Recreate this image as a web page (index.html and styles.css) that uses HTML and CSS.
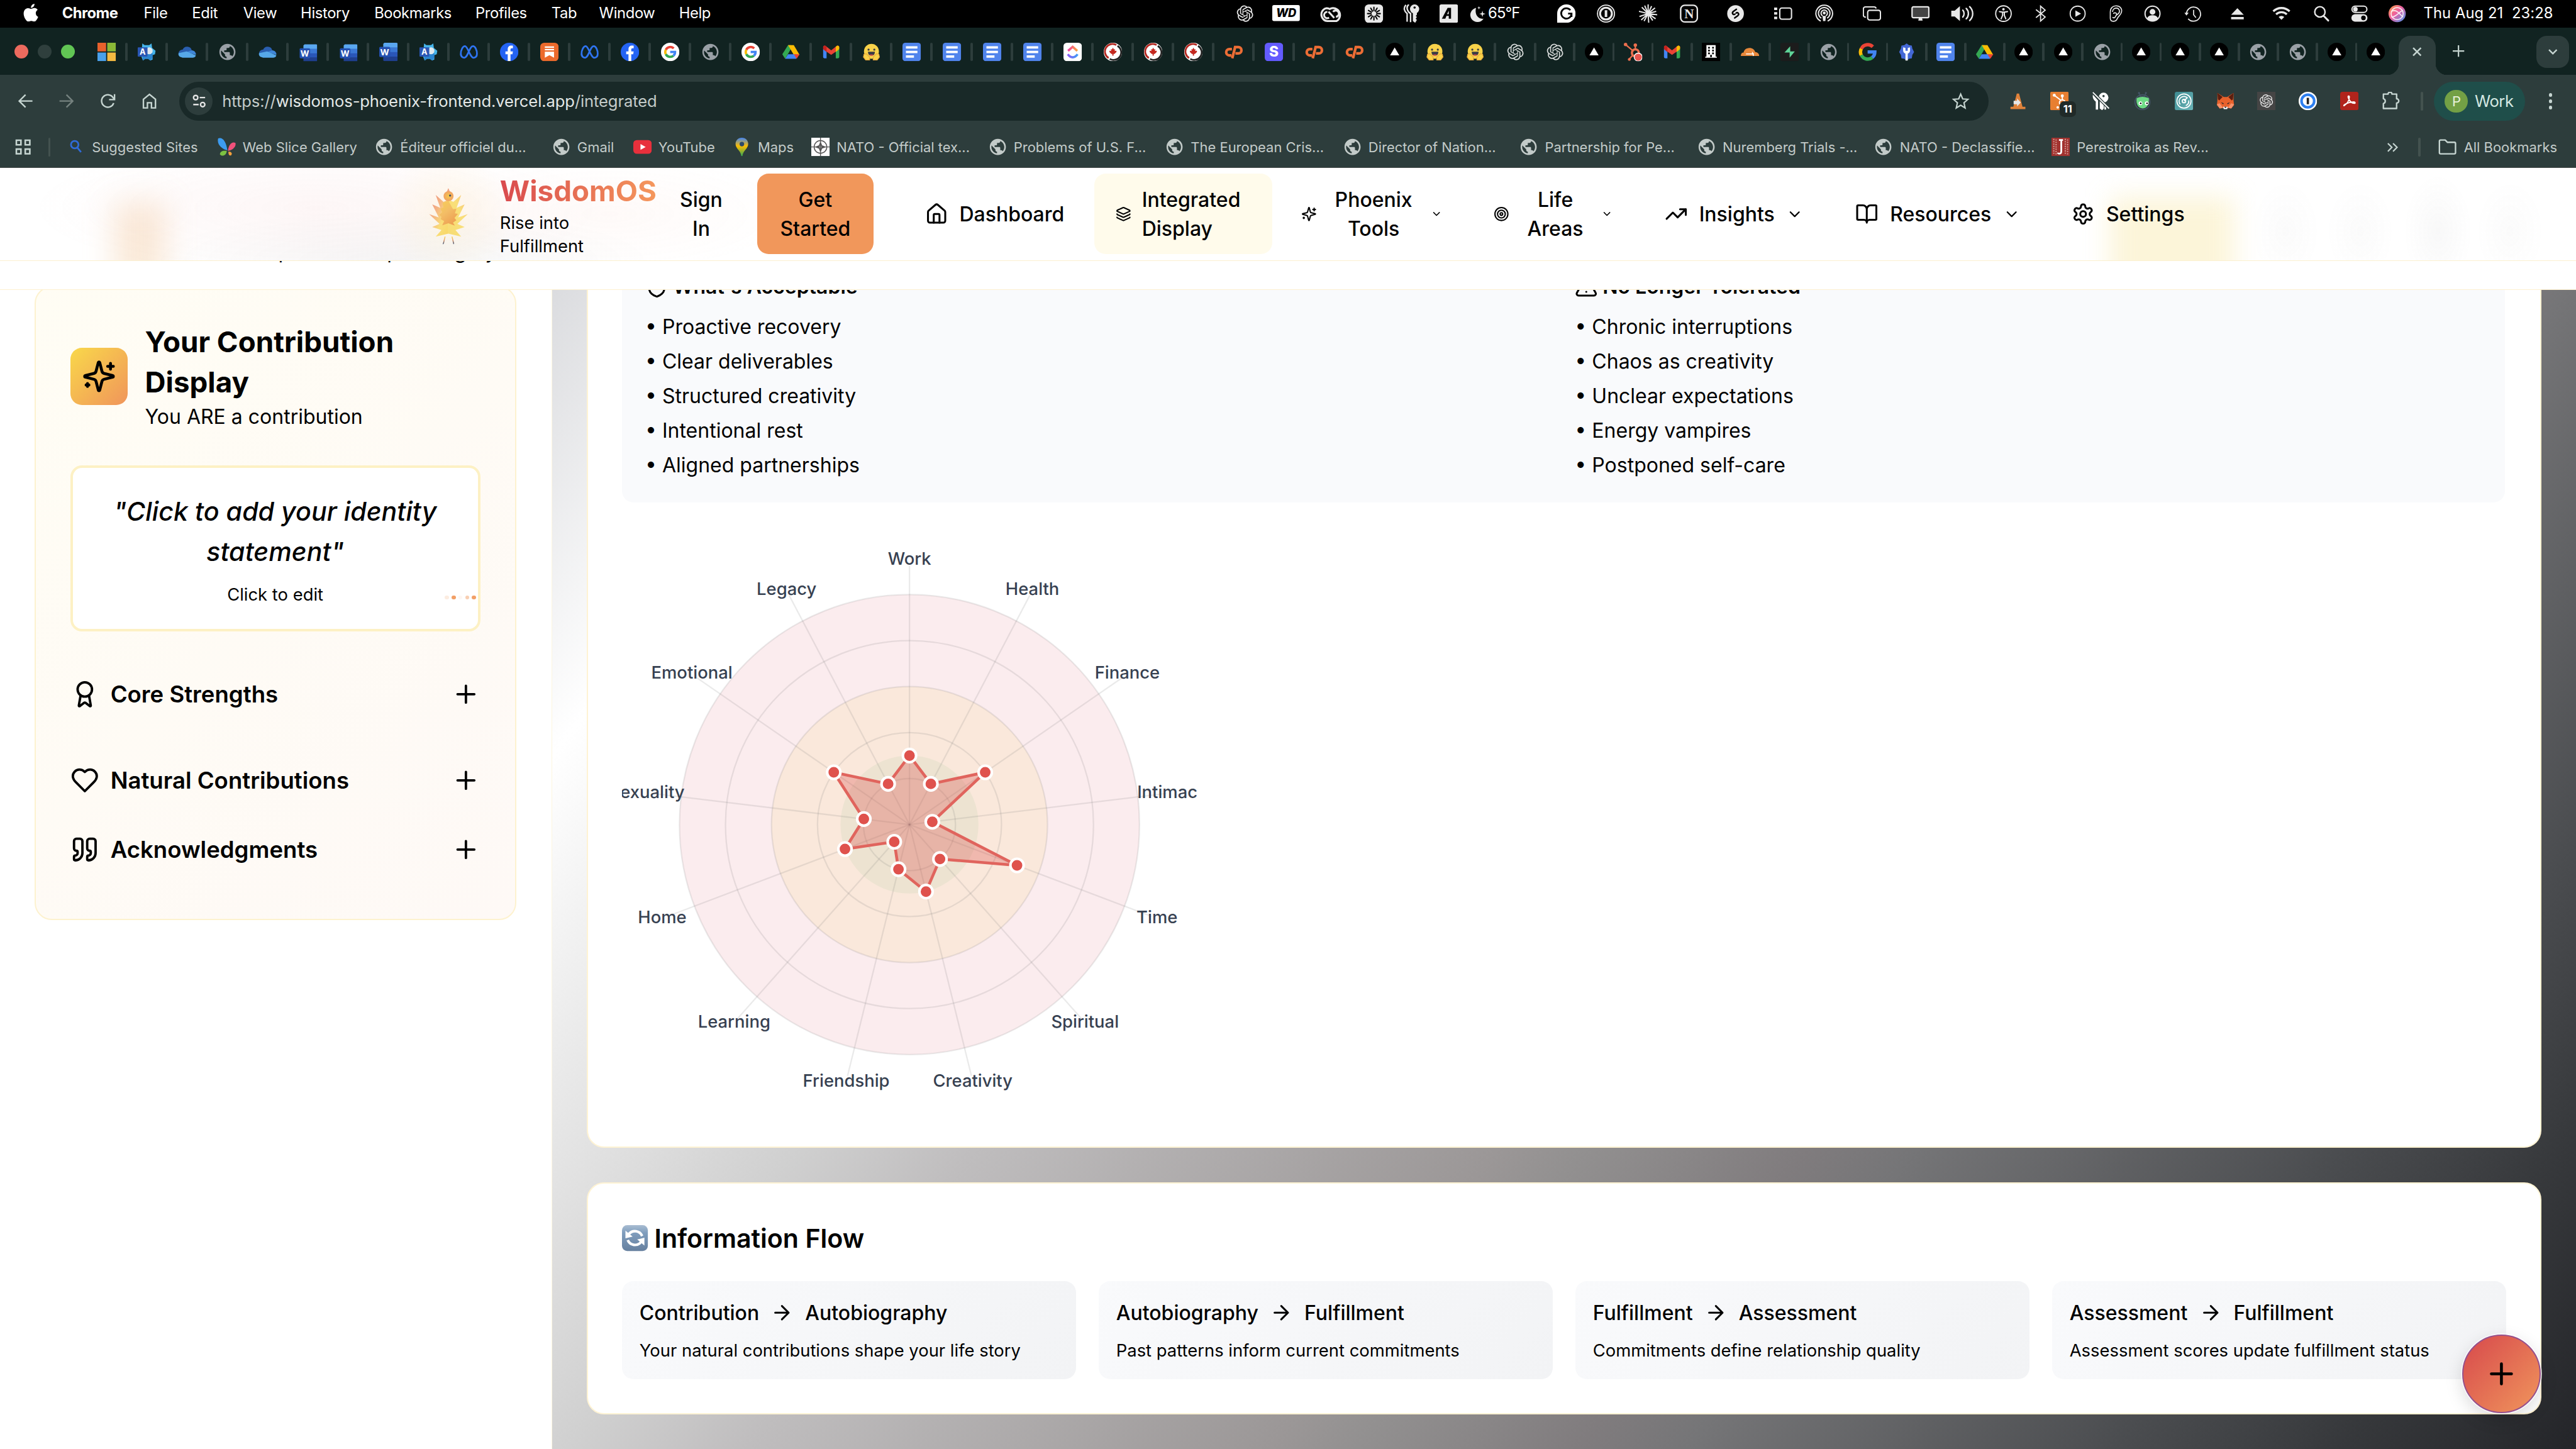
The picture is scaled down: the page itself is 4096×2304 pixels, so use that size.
FILE: index.html
```html
<!DOCTYPE html>
<html lang="en">
<head>
<meta charset="utf-8">
<title>WisdomOS - Integrated Display</title>
<link rel="stylesheet" href="styles.css">
</head>
<body>
<svg class="defs" aria-hidden="true">
<defs>
<linearGradient id="gMaps" x1="0" y1="0" x2="0" y2="1"><stop offset="0" stop-color="#4285f4"/><stop offset=".45" stop-color="#fbbc04"/><stop offset="1" stop-color="#34a853"/></linearGradient>
<linearGradient id="gSiri" x1="0" y1="0" x2="1" y2="1"><stop offset="0" stop-color="#f7a33c"/><stop offset=".45" stop-color="#ef5fa0"/><stop offset="1" stop-color="#3d9bf5"/></linearGradient>
<linearGradient id="gWing" x1="0" y1="0" x2="1" y2="1"><stop offset="0" stop-color="#e9857b"/><stop offset=".35" stop-color="#f4b183"/><stop offset=".65" stop-color="#f9dd78"/><stop offset="1" stop-color="#f8d765"/></linearGradient>
<linearGradient id="gWing2" x1="0" y1="1" x2="1" y2="0"><stop offset="0" stop-color="#f7dc74"/><stop offset=".6" stop-color="#f9df78"/><stop offset="1" stop-color="#f5bd7a"/></linearGradient>
<linearGradient id="gBelly" x1="0" y1="0" x2=".6" y2="1"><stop offset="0" stop-color="#f7cf56"/><stop offset=".5" stop-color="#f3bd66"/><stop offset="1" stop-color="#eda052"/></linearGradient>
<radialGradient id="gHead"><stop offset="0" stop-color="#f6cb4c"/><stop offset="1" stop-color="#f0a064"/></radialGradient>
<linearGradient id="gLeg" x1="0" y1="0" x2="0" y2="1"><stop offset="0" stop-color="#f9d65a"/><stop offset=".5" stop-color="#e8a070"/><stop offset="1" stop-color="#44506a"/></linearGradient>
<linearGradient id="gSync" x1="0" y1="0" x2="0" y2="1"><stop offset="0" stop-color="#a9bdd2"/><stop offset=".3" stop-color="#7f9dbd"/><stop offset="1" stop-color="#66809f"/></linearGradient>
<linearGradient id="gCu" x1="0" y1="0" x2="1" y2="0"><stop offset="0" stop-color="#f23fa4"/><stop offset="1" stop-color="#f9a53b"/></linearGradient>
<linearGradient id="gCu2" x1="0" y1="0" x2="1" y2="0"><stop offset="0" stop-color="#8b5cf6"/><stop offset="1" stop-color="#3f9df5"/></linearGradient>
<linearGradient id="gTeal" x1="0" y1="0" x2="1" y2="1"><stop offset="0" stop-color="#3d8a90"/><stop offset="1" stop-color="#6cb6ba"/></linearGradient>
</defs>
<symbol id="apple" viewBox="0 0 24 24"><path fill="#fff" d="M12.152 6.896c-.948 0-2.415-1.078-3.96-1.04-2.04.027-3.91 1.183-4.961 3.014-2.117 3.675-.546 9.103 1.519 12.09 1.013 1.454 2.208 3.09 3.792 3.039 1.52-.065 2.09-.987 3.935-.987 1.831 0 2.35.987 3.96.948 1.637-.026 2.676-1.48 3.676-2.948 1.156-1.688 1.636-3.325 1.662-3.415-.039-.013-3.182-1.221-3.22-4.857-.026-3.04 2.48-4.494 2.597-4.559-1.429-2.09-3.623-2.324-4.39-2.376-2-.156-3.675 1.09-4.61 1.09zM15.53 3.83c.843-1.012 1.4-2.427 1.245-3.83-1.207.052-2.662.805-3.532 1.818-.78.896-1.454 2.338-1.273 3.714 1.338.104 2.715-.688 3.559-1.701"/></symbol>
<symbol id="openai" viewBox="-1.5 -1.5 27 27"><path fill="currentColor" d="M22.2819 9.8211a5.9847 5.9847 0 0 0-.5157-4.9108 6.0462 6.0462 0 0 0-6.5098-2.9A6.0651 6.0651 0 0 0 4.9807 4.1818a5.9847 5.9847 0 0 0-3.9977 2.9 6.0462 6.0462 0 0 0 .7427 7.0966 5.98 5.98 0 0 0 .511 4.9107 6.051 6.051 0 0 0 6.5146 2.9001A5.9847 5.9847 0 0 0 13.2599 24a6.0557 6.0557 0 0 0 5.7718-4.2058 5.9894 5.9894 0 0 0 3.9977-2.9001 6.0557 6.0557 0 0 0-.7475-7.0729zm-9.022 12.6081a4.4755 4.4755 0 0 1-2.8764-1.0408l.1419-.0804 4.7783-2.7582a.7948.7948 0 0 0 .3927-.6813v-6.7369l2.02 1.1686a.071.071 0 0 1 .038.052v5.5826a4.504 4.504 0 0 1-4.4945 4.4944zm-9.6607-4.1254a4.4708 4.4708 0 0 1-.5346-3.0137l.142.0852 4.783 2.7582a.7712.7712 0 0 0 .7806 0l5.8428-3.3685v2.3324a.0804.0804 0 0 1-.0332.0615L9.74 19.9502a4.4992 4.4992 0 0 1-6.1408-1.6464zM2.3408 7.8956a4.485 4.485 0 0 1 2.3655-1.9728V11.6a.7664.7664 0 0 0 .3879.6765l5.8144 3.3543-2.0201 1.1685a.0757.0757 0 0 1-.071 0l-4.8303-2.7865A4.504 4.504 0 0 1 2.3408 7.872zm16.5963 3.8558L13.1038 8.364 15.1192 7.2a.0757.0757 0 0 1 .071 0l4.8303 2.7913a4.4944 4.4944 0 0 1-.6765 8.1042v-5.6772a.79.79 0 0 0-.407-.667zm2.0107-3.0231l-.142-.0852-4.7735-2.7818a.7759.7759 0 0 0-.7854 0L9.409 9.2297V6.8974a.0662.0662 0 0 1 .0284-.0615l4.8303-2.7866a4.4992 4.4992 0 0 1 6.6802 4.66zM8.3065 12.863l-2.02-1.1638a.0804.0804 0 0 1-.038-.0567V6.0742a4.4992 4.4992 0 0 1 7.3757-3.4537l-.142.0805L8.704 5.459a.7948.7948 0 0 0-.3927.6813zm1.0976-2.3654l2.602-1.4998 2.6069 1.4998v2.9994l-2.5974 1.4997-2.6067-1.4997Z"/></symbol>
<symbol id="globe" viewBox=".57 .57 22.86 22.86"><path fill="currentColor" d="M12 2C6.48 2 2 6.48 2 12s4.48 10 10 10 10-4.48 10-10S17.52 2 12 2zm-1 17.93c-3.95-.49-7-3.85-7-7.93 0-.62.08-1.21.21-1.79L9 15v1c0 1.1.9 2 2 2v1.93zm6.9-2.54c-.26-.81-1-1.39-1.9-1.39h-1v-3c0-.55-.45-1-1-1H8v-2h2c.55 0 1-.45 1-1V7h2c1.1 0 2-.9 2-2v-.41c2.93 1.19 5 4.06 5 7.41 0 2.08-.8 3.97-2.1 5.39z"/></symbol>

<symbol id="ms" viewBox="0 0 32 32"><path fill="#e8612c" d="M0 0h15v15H0z"/><path fill="#8bb837" d="M17 0h15v15H17z"/><path fill="#4aa0ea" d="M0 17h15v15H0z"/><path fill="#f4b941" d="M17 17h15v15H17z"/></symbol>
<symbol id="aword" viewBox="0 0 32 32"><path fill="#46b4ea" d="M8 1l4 3h8l4-3 1 8 6 5-1 6-5 2 1 7-4 2-4-3h-5l-4 3-3-8z"/><path fill="#2b84cf" d="M8 22l18-4 0 8-4 5-4-3h-5l-4 3z"/><circle cx="20" cy="14" r="6" fill="#dfe8ee"/><rect x="0" y="8" width="17" height="16" rx="1" fill="#2a56b4"/><text x="8.5" y="21" font-size="14" font-weight="700" fill="#fff" text-anchor="middle">A</text></symbol>
<symbol id="onedrive" viewBox="0 0 32 32"><path fill="#2a5fb0" d="M8 12a8.500 8.500 0 0 1 16 1l-7 7-13 2-3-3c0-4 3-7 7-7z"/><path fill="#3f86d8" d="M24 13c4 0 8 4 7 8l-16-5z"/><path fill="#56a8e8" d="M5 25c-3-1-5-4-4-7l14-3 16 7c0 2-2 4-5 4H8z"/></symbol>
<symbol id="word" viewBox="0 0 32 32"><path fill="#5aa7f0" d="M9 0h21a2 2 0 0 1 2 2v7H7V2z"/><path fill="#3b78d4" d="M7 8h25v9H7z"/><path fill="#2a56b8" d="M7 16h25v8H7z"/><path fill="#1f3f8f" d="M7 24h25v6a2 2 0 0 1-2 2H9a2 2 0 0 1-2-2z"/><rect x="0" y="7" width="19" height="18" rx="2" fill="#2450b0"/><text x="9.500" y="21.500" font-size="15" font-weight="700" fill="#fff" text-anchor="middle">W</text></symbol>
<symbol id="wordsm" viewBox="-1 -2.500 34 35"><use href="#word"/></symbol>
<symbol id="meta" viewBox="0 0 32 32"><path fill="none" stroke="#2f74f0" stroke-width="3" d="M2 22C1 12 6 6 9 6c5 0 9 20 15 20 4 0 6-3 6-7 0-6-3-13-7-13-6 0-9 20-15 20-4 0-6-3-6-7"/></symbol>
<symbol id="fb" viewBox="0 0 32 32"><circle cx="16" cy="16" r="16" fill="#2463f3"/><path fill="#fff" d="M13.500 32V20H9.500v-5h4v-3.500c0-4.500 2.500-6.500 6-6.500 1.300 0 2.500.1 3 .2v4.500h-2c-1.700 0-2.200.9-2.200 2.200V15h4.200l-.8 5h-3.400v12z"/></symbol>
<symbol id="stack" viewBox="0 0 32 32"><rect width="32" height="32" rx="7" fill="#ec6a2c"/><path stroke="#fff" stroke-width="2.400" d="M8 7.500h16M8 12h16"/><path fill="#fff" d="M8 15.500h16V26l-8-4.500L8 26z"/></symbol>
<symbol id="gletter" viewBox="0 0 32 32"><g fill="none" stroke-width="6"><path stroke="#ea4335" d="M5 10.500A12.500 12.500 0 0 1 25 7"/><path stroke="#fbbc04" d="M5 10.300a12.500 12.500 0 0 0 0 11.400"/><path stroke="#34a853" d="M5 21.500A12.500 12.500 0 0 0 24 25.700"/><path stroke="#4285f4" d="M16 16h12.500a12.500 12.500 0 0 1-4.500 9.700"/></g></symbol>
<symbol id="gwhite" viewBox="0 0 32 32"><circle cx="16" cy="16" r="16" fill="#fff"/><use href="#gletter" x="5" y="5" width="22" height="22"/></symbol>
<symbol id="drive" viewBox="0 0 32 32"><path fill="#34a853" d="M11 4h5l2 3L6 28l-5-8z"/><path fill="#fbbc04" d="M11 4h10l10 17H21z"/><path fill="#4285f4" d="M6 28l5-8h15l-1 8z"/><path fill="#ea4335" d="M21 20h10l-5 8z"/></symbol>
<symbol id="gmail" viewBox="0 0 32 32"><path fill="#4285f4" d="M2 10l6 5v12H4a2 2 0 0 1-2-2z"/><path fill="#34a853" d="M30 10l-6 5v12h4a2 2 0 0 0 2-2z"/><path fill="#ea4335" d="M2 8c0-3 3-4 5-2l9 7 9-7c2-2 5-1 5 2l-1 4-13 9L3 12z"/><path fill="#fbbc04" d="M24 7l1-1c2-2 5-1 5 2v3l-6 5z"/><path fill="#c5221f" d="M8 7L7 6C5 4 2 5 2 8v3l6 5z"/></symbol>
<symbol id="hug" viewBox="0 0 32 32"><circle cx="16" cy="15" r="13" fill="#f8d24a"/><path fill="#f8d24a" stroke="#e9a63a" stroke-width="1.200" d="M3 20l4-1 6 6v5H6l-4-5zM29 20l-4-1-6 6v5h7l4-5z"/><circle cx="11" cy="12" r="1.800" fill="#3a3b45"/><circle cx="21" cy="12" r="1.800" fill="#3a3b45"/><path fill="#3a3b45" d="M10 15.500h12c0 5-3 7-6 7s-6-2-6-7z"/><path fill="#ef4e4e" d="M12.500 20.500h7c-1 1.500-2.500 2-3.500 2s-2.500-.5-3.500-2z"/></symbol>
<symbol id="doc" viewBox="0 0 32 32"><rect width="32" height="32" rx="5" fill="#5084ec"/><path fill="#fff" d="M6 6h20v4H6zM6 14h20v4H6zM6 22h14v4H6z"/></symbol>
<symbol id="clickup" viewBox="0 0 32 32"><rect width="32" height="32" rx="6" fill="#fff"/><path fill="none" stroke="url(#gCu)" stroke-width="4" d="M8 14l8-7 8 7"/><path fill="none" stroke="url(#gCu2)" stroke-width="4" d="M7.500 20c5 7 12 7 17 0"/></symbol>
<symbol id="maple" viewBox="0 0 32 32"><circle cx="16" cy="16" r="16" fill="#fff"/><path fill="none" stroke="#b3261e" stroke-width="3" d="M22 4A13 13 0 0 0 8.500 26.500"/><path fill="none" stroke="#222" stroke-width="3" d="M10.500 28A13 13 0 0 0 24 5.500"/><path fill="#c4281f" d="M16 8.500l1.800 3.200 1.800-.7-.5 3.600 2.700-.9.500 2.200-3.600 3.600H17v3h-2v-3h-1.700l-3.600-3.600.5-2.200 2.700.9-.5-3.600 1.800.7z"/></symbol>
<symbol id="cpanel" viewBox="0 0 32 32"><path fill="none" stroke="#ec6d35" stroke-width="4.600" d="M13 11H8.500a5.300 5.300 0 0 0 0 11H12M13.500 27l5-19.500H24a5.500 5.500 0 0 1 0 11h-5"/></symbol>
<symbol id="stripe" viewBox="0 0 32 32"><rect width="32" height="32" rx="6" fill="#635bff"/><text x="16" y="24.500" font-size="25" font-weight="800" fill="#fff" text-anchor="middle">S</text></symbol>
<symbol id="vercel" viewBox="0 0 32 32"><circle cx="16" cy="16" r="16" fill="#000"/><path fill="#fff" d="M16 8.200l8 13.800H8z"/></symbol>
<symbol id="hubspot" viewBox="0 0 32 32"><g stroke="#ec6f4e" fill="none"><path stroke-width="2.500" d="M4 4l13 11M20 4v8M10 28l6-7"/><circle cx="20" cy="17.500" r="6" stroke-width="4"/></g><circle cx="3" cy="3" r="3" fill="#ec6f4e"/><circle cx="20" cy="4" r="3" fill="#ec6f4e"/><circle cx="9.500" cy="29" r="2.500" fill="#ec6f4e"/><circle cx="25" cy="25" r="7" fill="#e8564f" stroke="#fff" stroke-width="1.500"/></symbol>
<symbol id="building" viewBox="0 0 32 32"><path d="M0 0h32v32H0z"/><path fill="#fff" d="M8 4h16v20h2v2H6v-2h2z"/><path fill="#000" d="M11 7h3v3h-3zM18 7h3v3h-3zM11 12h3v3h-3zM18 12h3v3h-3zM11 17h3v3h-3zM18 17h3v3h-3zM14.500 21h3v4h-3z"/></symbol>
<symbol id="cloudflare" viewBox="0 0 32 32"><path fill="#e8883b" d="M0 23c0-4 2-6 5-6 0-4 4-8 10-8 5 0 9 3 10 7 4 0 7 3 7 7z"/><path stroke="#fff" stroke-width="1.600" fill="none" d="M9 19.500h14M20 16l2 7"/></symbol>
<symbol id="supabase" viewBox="0 0 32 32"><rect width="32" height="32" rx="3" fill="#1c1c1c"/><path fill="#5fd398" d="M17 6v9h8l-9 11v-9H7z"/></symbol>
<symbol id="gearw" viewBox="0 0 32 32"><path fill="#4468d6" d="M16 1l4 3 5 1 1 5 3 6-3 5-1 6-5 1-4 3-4-3-5-1-1-6-3-5 3-6 1-5 5-1z"/><path fill="#fff" d="M10 8v6a6 6 0 0 0 4 5v12h4V19a6 6 0 0 0 4-5V8l-4 1v5h-4V9z"/></symbol>

<symbol id="m-wd" viewBox="0 0 48 30"><rect width="48" height="28" rx="3" fill="#fff"/><text x="24" y="21" font-size="20" font-weight="800" font-style="italic" text-anchor="middle">WD</text></symbol>
<symbol id="m-cc" viewBox="0 0 40 32"><g fill="none" stroke="#e8e8e8" stroke-width="3.400"><path d="M29 29H13A11.500 11.500 0 0 1 6 9.500C9 6 14 6 17 8a11 11 0 1 1 12 21z"/><path d="M28 21.500a5.500 5.500 0 1 0-5-8.500M13 13a5.500 5.500 0 1 0 3 10M15 12.500l10 11"/></g></symbol>
<symbol id="m-burst" viewBox="0 0 32 32"><rect width="32" height="32" rx="7" fill="#e8e8e8"/><g stroke="#000" stroke-width="2.200" stroke-linecap="round"><path d="M16 5v6M16 21v6M5 16h6M21 16h6M10.500 6.500l3 5.200M18.500 20.300l3 5.200M6.500 10.500l5.200 3M20.300 18.500l5.200 3M21.500 6.500l-3 5.200M13.500 20.300l-3 5.200M25.500 10.500l-5.200 3M11.700 18.500l-5.200 3"/></g></symbol>
<symbol id="m-keys" viewBox="0 0 32 32"><g fill="#e8e8e8"><circle cx="20" cy="8" r="8"/><path d="M17 14h7v4l-2 2 2 2-2 3 2 2-3 5-4-3z"/></g><circle cx="20" cy="5.500" r="2" fill="#000"/><g fill="none" stroke="#e8e8e8" stroke-width="2.600"><path d="M10 0c-6 5-2 13 3 16v15M5 1c-5 5-3 11 2 15v14"/></g></symbol>
<symbol id="m-a" viewBox="0 0 32 32"><rect width="32" height="32" rx="3" fill="#e8e8e8"/><path d="M4 25L14 6h6v19h-4v-5h-4l-2 5z"/><path fill="#e8e8e8" d="M13 17l3-6v6z"/></symbol>
<symbol id="m-moon" viewBox="0 0 32 32"><path fill="#e8e8e8" d="M11 6a12.500 12.500 0 1 0 13 19C14 26 8 17 11 6z"/><path fill="#e8e8e8" d="M22 11l1.200 4.300 4.300 1.200-4.300 1.200L22 22l-1.200-4.300-4.300-1.200 4.300-1.200zM16 3l.7 2.300 2.300.7-2.300.7L16 9l-.7-2.300L13 6l2.300-.7z"/></symbol>
<symbol id="m-g" viewBox="0 0 32 32"><path fill="#fff" d="M16 0a16 16 0 1 1 0 32H0V16A16 16 0 0 1 16 0z"/><path fill="none" stroke="#000" stroke-width="3" d="M23 10a9 9 0 1 0 2 6h-6M25 16v6"/></symbol>
<symbol id="m-1p" viewBox="0 0 32 32"><g fill="none" stroke="#e8e8e8" stroke-width="2"><circle cx="16" cy="16" r="14.800"/></g><circle cx="16" cy="16" r="12" fill="#e8e8e8"/><circle cx="16" cy="16" r="8.500" fill="#000"/><path fill="#e8e8e8" d="M13.800 10h4.400v12h-4.400z"/></symbol>
<symbol id="m-claude" viewBox="0 0 32 32"><g stroke="#e8e8e8" stroke-width="2.200"><path d="M16 16V0M16 16l6-13M16 16L28 6M16 16l14-4M16 16l16 2M16 16l13 9M16 16l8 12M16 16l1 16M16 16L9 29M16 16L4 27M16 16L1 21M16 16L0 12M16 16L5 5M16 16L10 2"/></g></symbol>
<symbol id="m-notion" viewBox="0 0 32 32"><rect x="1.500" y="1.500" width="29" height="29" rx="7" fill="none" stroke="#e8e8e8" stroke-width="2.600"/><text x="16" y="24" font-size="23" font-weight="700" font-family="Liberation Serif, serif" fill="#e8e8e8" text-anchor="middle">N</text></symbol>
<symbol id="m-shazam" viewBox="0 0 32 32"><circle cx="16" cy="16" r="14.500" fill="#e8e8e8"/><path fill="none" stroke="#000" stroke-width="2.600" stroke-linecap="round" d="M17.500 8.500L12.500 12c-4 3-.5 7 2.500 5M14.500 23.500l5-3.500c4-3 .5-7-2.500-5"/></symbol>
<symbol id="m-stage" viewBox="0 0 36 32"><path fill="#e8e8e8" d="M0 4h6v5H0zM0 13h6v5H0zM0 22h6v5H0z"/><rect x="11" y="5" width="23" height="22" rx="4" fill="none" stroke="#e8e8e8" stroke-width="2.600"/></symbol>
<symbol id="m-cast" viewBox="0 0 32 32"><g fill="none" stroke="#e8e8e8" stroke-width="2.200"><path d="M10 29a14.500 14.500 0 1 1 12 0M11 24a10 10 0 1 1 10 0M13 20a5.500 5.500 0 1 1 6 0"/></g><circle cx="16" cy="15" r="2.600" fill="#e8e8e8"/><path fill="#e8e8e8" d="M13 20h6l-1 9h-4z"/></symbol>
<symbol id="m-win" viewBox="0 0 36 32"><g fill="none" stroke="#e8e8e8" stroke-width="2.600"><rect x="9.500" y="9.500" width="25" height="19" rx="4"/><path d="M6 23H5a4 4 0 0 1-4-4V7a4 4 0 0 1 4-4h17a4 4 0 0 1 4 3"/></g></symbol>
<symbol id="m-disp" viewBox="0 0 34 32"><rect x="1.500" y="3.500" width="31" height="20" rx="2.500" fill="#444" stroke="#e8e8e8" stroke-width="2.600"/><path fill="#e8e8e8" d="M14 24h6l1 5h-8z"/></symbol>
<symbol id="m-vol" viewBox="0 0 40 32"><path fill="#e8e8e8" d="M0 11h6l9-8v26l-9-8H0z"/><path fill="none" stroke="#e8e8e8" stroke-width="2.600" stroke-linecap="round" d="M20 10c3 3 3 9 0 12M26 7c5 5 5 13 0 18M32 4c7 7 7 17 0 24"/></symbol>
<symbol id="m-access" viewBox="0 0 32 32"><circle cx="16" cy="16" r="13.500" fill="none" stroke="#e8e8e8" stroke-width="2"/><circle cx="16" cy="8.500" r="2.200" fill="#e8e8e8"/><path fill="none" stroke="#e8e8e8" stroke-width="2.200" stroke-linecap="round" d="M9 12.500l5 1h4l5-1M14.500 14v5L12 25M17.500 14v5l2.500 6"/></symbol>
<symbol id="m-bt" viewBox="0 0 32 32"><path fill="none" stroke="#e8e8e8" stroke-width="2" d="M8 9l16 13-8 7V3l8 7L8 23"/></symbol>
<symbol id="m-play" viewBox="0 0 32 32"><circle cx="16" cy="16" r="13" fill="none" stroke="#e8e8e8" stroke-width="2"/><path fill="#e8e8e8" d="M12 10.500l10 5.500-10 5.500z"/></symbol>
<symbol id="m-ear" viewBox="0 0 32 32"><g fill="none" stroke="#e8e8e8" stroke-width="1.800"><path d="M6 24V13C6 6 11 2.500 16 2.500c7 0 11 5 9.500 11C24 19 20 20 18 25c-2 6-12 6-12-1z"/><path d="M10 13c0-8 12-9 12-1 0 5-5 5-7 9-1 3-4 3-5 1M11 16c4-3 8 0 5 3"/></g></symbol>
<symbol id="m-user" viewBox="0 0 32 32"><circle cx="16" cy="16" r="13" fill="none" stroke="#e8e8e8" stroke-width="2.200"/><circle cx="16" cy="13" r="5" fill="#e8e8e8"/><path fill="#e8e8e8" d="M6.500 24.500C8 20 12 19 16 19s8 1 9.500 5.500a13 13 0 0 1-19 0z"/></symbol>
<symbol id="m-hist" viewBox="0 0 32 32"><path fill="none" stroke="#e8e8e8" stroke-width="1.900" d="M5 17A12.300 12.300 0 1 1 8 25M17.500 9.500V18l4 5"/><path fill="#e8e8e8" d="M1.500 14.500h7.500L5 19.500z"/></symbol>
<symbol id="m-eject" viewBox="0 0 32 32"><path fill="#e8e8e8" d="M16 6.500l11 11.500H5zM5 22h22v4H5z"/></symbol>
<symbol id="m-wifi" viewBox="0 0 36 32"><g fill="none" stroke="#e8e8e8" stroke-width="4.200"><path d="M2 11.500a23 23 0 0 1 32 0M7.500 17.500a15 15 0 0 1 21 0"/></g><path fill="#e8e8e8" d="M12.500 22.500a8 8 0 0 1 11 0L18 28z"/></symbol>
<symbol id="m-search" viewBox="0 0 32 32"><circle cx="14" cy="13" r="9" fill="none" stroke="#e8e8e8" stroke-width="2.600"/><path stroke="#e8e8e8" stroke-width="3.200" stroke-linecap="round" d="M20.500 20l8 8"/></symbol>
<symbol id="m-ctl" viewBox="0 0 32 32"><rect x="3" y="3" width="26" height="11" rx="5.500" fill="none" stroke="#e8e8e8" stroke-width="2.200"/><circle cx="9" cy="8.500" r="4" fill="#e8e8e8"/><rect x="2" y="17" width="28" height="13" rx="6.500" fill="#e8e8e8"/><circle cx="23" cy="23.500" r="4" fill="#000"/></symbol>
<symbol id="m-siri" viewBox="0 0 32 32"><circle cx="16" cy="16" r="15" fill="url(#gSiri)"/><g fill="none" stroke="#fff" stroke-width="1.800" opacity=".85"><path d="M6 12c8-4 12 2 20 10M6 22c9 0 12-8 20-12"/><circle cx="16" cy="16" r="10.500"/></g></symbol>

<symbol id="t-back" viewBox="0 0 32 32"><path fill="none" stroke="#c6d5d1" stroke-width="2.600" d="M28 16H6M16 5L5 16l11 11"/></symbol>
<symbol id="t-fwd" viewBox="0 0 32 32"><path fill="none" stroke="#75827f" stroke-width="2.600" d="M4 16h22M16 5l11 11-11 11"/></symbol>
<symbol id="t-reload" viewBox="0 0 32 32"><path fill="none" stroke="#c6d5d1" stroke-width="2.600" d="M26 19.500A10.800 10.800 0 1 1 24.500 9.500L27 12.500"/><path fill="none" stroke="#c6d5d1" stroke-width="2.600" d="M27.500 4v9.500H18"/></symbol>
<symbol id="t-home" viewBox="0 0 32 32"><path fill="none" stroke="#c6d5d1" stroke-width="2.600" d="M5.500 13L16 4.500 26.500 13v15h-7v-9h-7v9h-7z"/></symbol>
<symbol id="t-tune" viewBox="0 0 32 32"><g fill="none" stroke="#e3e3e3" stroke-width="2.800"><circle cx="9.500" cy="9.500" r="4"/><circle cx="22.500" cy="22.500" r="4"/><path d="M17 9.500h10M5 22.500h10"/></g></symbol>
<symbol id="t-star" viewBox="0 0 32 32"><path fill="none" stroke="#c6d5d1" stroke-width="2.400" d="M16 4l3.500 8.300 9 .8-6.800 6 2 8.900-7.700-4.700L8.300 28l2-8.900-6.800-6 9-.8z"/></symbol>
<symbol id="x-vlc" viewBox="0 0 32 32"><path fill="#e0823a" d="M14 3h4l6 23H8zM3 26h26v4H3z"/><path fill="#e6e6e6" d="M8.500 15.500h6v-4l6.500 7-6.500 7v-4h-6z"/></symbol>
<symbol id="x-hub" viewBox="0 0 32 32"><rect width="32" height="32" rx="2" fill="#e87f31"/><g stroke="#fff" stroke-width="2.200" fill="none"><path d="M7 6l12 9M21 6v9"/></g><circle cx="7" cy="6" r="2.600" fill="#fff"/><circle cx="21" cy="7" r="2.600" fill="#fff"/><circle cx="13" cy="27" r="2.200" fill="#fff"/><circle cx="21" cy="19" r="5" fill="none" stroke="#fff" stroke-width="2.200"/></symbol>
<symbol id="x-keys" viewBox="0 0 32 32"><g fill="#fff"><circle cx="20.500" cy="10" r="8.500"/><path d="M14 15h7v14l-3 3-4-3z"/><path d="M2 5l9 10v16H7V17C3 14 1 10 2 5zM22 24l3 2v5h-3z"/></g><circle cx="20.500" cy="7.500" r="2" fill="#2d3d3c"/><path stroke="#2d3d3c" stroke-width="5" d="M2 1l28 28"/><path stroke="#fff" stroke-width="2" d="M2 1l28 28"/></symbol>
<symbol id="x-bug" viewBox="0 0 32 32"><circle cx="16" cy="18" r="13" fill="none" stroke="#455567" stroke-width="1.800"/><path stroke="#455567" stroke-width="1.600" d="M10 1l2 7h8l2-7" fill="none"/><circle cx="10" cy="2" r="1.800" fill="#455567"/><circle cx="22" cy="2" r="1.800" fill="#455567"/><path fill="#6edb86" d="M6 11c6-3 14-3 21 0 1 10-3 18-10.500 18S4 21 6 11z"/><circle cx="12.500" cy="20" r="3.200" fill="#fff"/><circle cx="23.500" cy="20" r="3.200" fill="#fff"/><circle cx="13" cy="20" r="1.300"/><circle cx="24" cy="20" r="1.300"/></symbol>
<symbol id="x-radar" viewBox="0 0 32 32"><rect width="32" height="32" rx="3.500" fill="url(#gTeal)"/><g fill="none" stroke="#fff" stroke-width="1.900"><circle cx="16" cy="16" r="12.300"/><path d="M9.500 22a8.500 8.500 0 1 1 13-11M24.300 15a8.500 8.500 0 0 1-5 9M16 16l6-6"/><circle cx="16" cy="16" r="3"/></g></symbol>
<symbol id="x-fox" viewBox="0 0 32 32"><path fill="#e8622c" d="M2 2l11 7h6l11-7v13l1 8-5 6-6-1H12l-6 1-5-6 1-8z"/><path fill="#5b1f10" d="M2 2l9 7-6 6-2-2zM30 2l-9 7 6 6 2-2z"/><path fill="#f6916a" d="M1 22l5-2 6 8-6 1zM31 22l-5-2-6 8 6 1z"/><path fill="#fff" d="M12 26h8l-1 4h-6z"/><path fill="#23272e" d="M8 18l5 2-1 2zM24 18l-5 2 1 2zM14 26h4l-1 2h-2z"/></symbol>
<symbol id="x-gpt" viewBox="0 0 32 32"><path fill="#454545" d="M0 0h32v32H0z"/><use href="#openai" x="3" y="3" width="26" height="26"/></symbol>
<symbol id="x-1p" viewBox="0 0 32 32"><circle cx="16" cy="16" r="16" fill="#fff"/><circle cx="16" cy="16" r="11" fill="none" stroke="#2d7ff0" stroke-width="4.500"/><path fill="#222" d="M14 10.500h4v11h-4z"/></symbol>
<symbol id="x-pdf" viewBox="0 0 32 32"><rect width="32" height="32" rx="4" fill="#b1241c"/><path fill="none" stroke="#fff" stroke-width="2" d="M7 24c5-3 9-9 9-15 0-3-3-2-2 1 2 6 6 10 11 10 2 0 1-3-2-2.500-6 .5-10 1.500-15 4.500-2 1-2 3-1 2z"/></symbol>
<symbol id="x-puzzle" viewBox="0 0 32 32"><path fill="none" stroke="#c6d5d1" stroke-width="2.600" stroke-linejoin="round" d="M3 4h8a3.500 3.500 0 0 1 7 0h8v8a3.500 3.500 0 0 1 0 7.500V29H3v-8.500a4.400 4.400 0 0 0 0-8.500z"/></symbol>
<symbol id="b-apps" viewBox="0 0 32 32"><g fill="none" stroke="#c6d5d1" stroke-width="3"><path d="M3.500 3.500h8.500V12H3.500zM20 3.500h8.500V12H20zM3.500 20h8.500v8.500H3.500zM20 20h8.500v8.500H20z"/></g></symbol>
<symbol id="b-search" viewBox="0 0 32 32"><g fill="none" stroke="#2f6bd8" stroke-width="3"><circle cx="14" cy="12" r="6.500"/><path d="M18.500 17L25 25"/></g></symbol>
<symbol id="b-msn" viewBox="0 0 32 32"><path fill="#3d9cf0" d="M1 1c8-3 14 6 16 21C8 20-2 12 1 1z"/><path fill="#f0517b" d="M31 9c-6-3-12 3-13 14 7-1 15-7 13-14z"/><path fill="#7cc242" d="M16 23c-7-1-12 1-12 6 3 4 11 3 12-6z"/><path fill="#f3a03c" d="M19 24c4 0 7 2 5 6-3 3-6-1-5-6z"/></symbol>
<symbol id="b-yt" viewBox="0 0 32 32"><rect y="4" width="32" height="24" rx="6" fill="#e8303c"/><path fill="#fff" d="M12.500 11l9 5-9 5z"/></symbol>
<symbol id="b-maps" viewBox="0 0 32 32"><path fill="url(#gMaps)" d="M16 0c7 0 11 5 11 11 0 8-9 11-10 21h-2C14 22 5 19 5 11 5 5 9 0 16 0z"/><circle cx="16" cy="11" r="4" fill="#2d4a6a"/></symbol>
<symbol id="b-nato" viewBox="0 0 32 32"><path fill="#fff" d="M0 0h32v32H0z"/><g fill="none" stroke="#555" stroke-width="1.600"><circle cx="16" cy="16" r="11"/><path d="M16 0v32M0 16h32M16 8l3 8-3 8-3-8zM8 16l8-3 8 3-8 3z"/></g></symbol>
<symbol id="b-jstor" viewBox="0 0 32 32"><path fill="#a2322f" d="M0 0h32v32H0z"/><g stroke="#d9a8a0" stroke-width="2" stroke-dasharray="2 2"><path d="M4 2v28M8 3v26M24 2v28M28 3v26"/></g><path stroke="#fff" stroke-width="3" fill="none" d="M13 4h7M17 4v20c0 5-6 4-6 2"/></symbol>
<symbol id="b-folder" viewBox="0 0 32 32"><path fill="none" stroke="#c6d5d1" stroke-width="2.600" stroke-linejoin="round" d="M2 6a2 2 0 0 1 2-2h8l4 4h12a2 2 0 0 1 2 2v16a2 2 0 0 1-2 2H4a2 2 0 0 1-2-2z"/></symbol>

<symbol id="l-home" viewBox="0 0 24 24"><path d="M15 21v-8a1 1 0 0 0-1-1h-4a1 1 0 0 0-1 1v8"/><path d="M3 10a2 2 0 0 1 .709-1.528l7-6a2 2 0 0 1 2.582 0l7 6A2 2 0 0 1 21 10v9a2 2 0 0 1-2 2H5a2 2 0 0 1-2-2z"/></symbol>
<symbol id="l-layers" viewBox="0 0 24 24"><path d="M12.830 2.180a2 2 0 0 0-1.660 0L2.600 6.080a1 1 0 0 0 0 1.830l8.580 3.910a2 2 0 0 0 1.660 0l8.580-3.900a1 1 0 0 0 0-1.830z"/><path d="M2 12a1 1 0 0 0 .58.910l8.600 3.910a2 2 0 0 0 1.650 0l8.580-3.900A1 1 0 0 0 22 12"/><path d="M2 17a1 1 0 0 0 .58.910l8.600 3.910a2 2 0 0 0 1.650 0l8.580-3.900A1 1 0 0 0 22 17"/></symbol>
<symbol id="l-sparkles" viewBox="0 0 24 24"><path d="M9.937 15.500A2 2 0 0 0 8.500 14.063l-6.135-1.582a.5.5 0 0 1 0-.962L8.500 9.936A2 2 0 0 0 9.937 8.500l1.582-6.135a.5.5 0 0 1 .963 0L14.063 8.500A2 2 0 0 0 15.500 9.937l6.135 1.581a.5.5 0 0 1 0 .964L15.500 14.063a2 2 0 0 0-1.437 1.437l-1.582 6.135a.5.5 0 0 1-.963 0z"/><path d="M20 3v4M22 5h-4M4 17v2M5 18H3"/></symbol>
<symbol id="l-target" viewBox="0 0 24 24"><circle cx="12" cy="12" r="10"/><circle cx="12" cy="12" r="6"/><circle cx="12" cy="12" r="2"/></symbol>
<symbol id="l-trend" viewBox="0 0 24 24"><path d="M22 7l-8.500 8.500-5-5L2 17M16 7h6v6"/></symbol>
<symbol id="l-book" viewBox="0 0 24 24"><path d="M12 7v14M3 18a1 1 0 0 1-1-1V4a1 1 0 0 1 1-1h5a4 4 0 0 1 4 4 4 4 0 0 1 4-4h5a1 1 0 0 1 1 1v13a1 1 0 0 1-1 1h-6a3 3 0 0 0-3 3 3 3 0 0 0-3-3z"/></symbol>
<symbol id="l-gear" viewBox="0 0 24 24"><path d="M12.220 2h-.44a2 2 0 0 0-2 2v.18a2 2 0 0 1-1 1.730l-.43.25a2 2 0 0 1-2 0l-.15-.08a2 2 0 0 0-2.730.73l-.22.38a2 2 0 0 0 .73 2.730l.15.1a2 2 0 0 1 1 1.720v.51a2 2 0 0 1-1 1.740l-.15.09a2 2 0 0 0-.73 2.730l.22.38a2 2 0 0 0 2.730.73l.15-.08a2 2 0 0 1 2 0l.43.25a2 2 0 0 1 1 1.730V20a2 2 0 0 0 2 2h.44a2 2 0 0 0 2-2v-.18a2 2 0 0 1 1-1.730l.43-.25a2 2 0 0 1 2 0l.15.08a2 2 0 0 0 2.730-.73l.22-.39a2 2 0 0 0-.73-2.730l-.15-.08a2 2 0 0 1-1-1.740v-.5a2 2 0 0 1 1-1.740l.15-.09a2 2 0 0 0 .73-2.730l-.22-.38a2 2 0 0 0-2.730-.73l-.15.08a2 2 0 0 1-2 0l-.43-.25a2 2 0 0 1-1-1.730V4a2 2 0 0 0-2-2z"/><circle cx="12" cy="12" r="3"/></symbol>
<symbol id="l-chev" viewBox="0 0 24 24"><path d="M6 9l6 6 6-6"/></symbol>
<symbol id="l-plus" viewBox="0 0 24 24"><path d="M5 12h14M12 5v14"/></symbol>
<symbol id="l-arrow" viewBox="0 0 24 24"><path d="M5 12h14M12 5l7 7-7 7"/></symbol>
<symbol id="l-award" viewBox="0 0 24 24"><path d="M15.477 12.890l1.515 8.526a.5.5 0 0 1-.81.470l-3.580-2.687a1 1 0 0 0-1.197 0l-3.586 2.686a.5.5 0 0 1-.810-.469l1.514-8.526"/><circle cx="12" cy="8" r="6"/></symbol>
<symbol id="l-heart" viewBox="0 0 24 24"><path d="M19 14c1.490-1.460 3-3.210 3-5.500A5.500 5.500 0 0 0 16.500 3c-1.760 0-3 .5-4.500 2-1.500-1.500-2.740-2-4.500-2A5.500 5.500 0 0 0 2 8.500c0 2.300 1.500 4.050 3 5.500l7 7z"/></symbol>
<symbol id="l-quote" viewBox="0 0 24 24"><path d="M16 3a2 2 0 0 0-2 2v6a2 2 0 0 0 2 2 1 1 0 0 1 1 1v1a2 2 0 0 1-2 2 1 1 0 0 0-1 1v2a1 1 0 0 0 1 1 6 6 0 0 0 6-6V5a2 2 0 0 0-2-2z"/><path d="M5 3a2 2 0 0 0-2 2v6a2 2 0 0 0 2 2 1 1 0 0 1 1 1v1a2 2 0 0 1-2 2 1 1 0 0 0-1 1v2a1 1 0 0 0 1 1 6 6 0 0 0 6-6V5a2 2 0 0 0-2-2z"/></symbol>
<symbol id="l-shield" viewBox="0 0 24 24"><path d="M20 13c0 5-3.500 7.500-7.660 8.950a1 1 0 0 1-.67-.01C7.500 20.500 4 18 4 13V6a1 1 0 0 1 1-1c2 0 4.500-1.200 6.240-2.720a1.170 1.170 0 0 1 1.520 0C14.510 3.810 17 5 19 5a1 1 0 0 1 1 1z"/></symbol>
<symbol id="l-warn" viewBox="0 0 24 24"><path d="M21.730 18l-8-14a2 2 0 0 0-3.480 0l-8 14A2 2 0 0 0 4 21h16a2 2 0 0 0 1.730-3M12 9v4M12 17h.01"/></symbol>
</svg>

<header class="menubar">
  <svg class="apple"><use href="#apple"/></svg>
  <nav class="menus"><b>Chrome</b><span>File</span><span>Edit</span><span>View</span><span>History</span><span>Bookmarks</span><span>Profiles</span><span>Tab</span><span>Window</span><span>Help</span></nav>
  <div class="status">
    <svg class="oa"><use href="#openai"/></svg><svg class="wide"><use href="#m-wd"/></svg><svg class="wide"><use href="#m-cc"/></svg><svg><use href="#m-burst"/></svg><svg><use href="#m-keys"/></svg><svg><use href="#m-a"/></svg>
    <span class="weather"><svg><use href="#m-moon"/></svg><span>65°F</span></span>
    <svg><use href="#m-g"/></svg><svg><use href="#m-1p"/></svg><svg><use href="#m-claude"/></svg><svg><use href="#m-notion"/></svg><svg><use href="#m-shazam"/></svg><svg><use href="#m-stage"/></svg><svg><use href="#m-cast"/></svg><svg><use href="#m-win"/></svg><svg><use href="#m-disp"/></svg><svg class="wide"><use href="#m-vol"/></svg><svg><use href="#m-access"/></svg><svg><use href="#m-bt"/></svg><svg><use href="#m-play"/></svg><svg><use href="#m-ear"/></svg><svg><use href="#m-user"/></svg><svg><use href="#m-hist"/></svg><svg><use href="#m-eject"/></svg><svg><use href="#m-wifi"/></svg><svg><use href="#m-search"/></svg><svg><use href="#m-ctl"/></svg><svg><use href="#m-siri"/></svg>
    <span class="clock">Thu Aug 21&nbsp; 23:28</span>
  </div>
</header>

<div class="tabstrip">
  <div class="lights"><i class="r"></i><i class="o"></i><i class="g"></i></div>
  <div class="tabs wide-tabs">
    <i><svg><use href="#ms"/></svg></i>
    <i><svg><use href="#aword"/></svg></i>
    <i><svg><use href="#onedrive"/></svg></i>
    <i><svg><use href="#globe"/></svg></i>
    <i><svg><use href="#onedrive"/></svg></i>
    <i><svg><use href="#wordsm"/></svg></i>
    <i><svg><use href="#wordsm"/></svg></i>
    <i><svg><use href="#word"/></svg></i>
    <i><svg><use href="#aword"/></svg></i>
    <i><svg><use href="#meta"/></svg></i>
    <i><svg><use href="#fb"/></svg></i>
    <i><svg><use href="#stack"/></svg></i>
    <i><svg><use href="#meta"/></svg></i>
    <i><svg><use href="#fb"/></svg></i>
    <i><svg><use href="#gwhite"/></svg></i>
    <i><svg><use href="#globe"/></svg></i>
    <i><svg><use href="#gwhite"/></svg></i>
    <i><svg><use href="#drive"/></svg></i>
    <i><svg><use href="#gmail"/></svg></i>
    <i><svg><use href="#hug"/></svg></i>
    <i><svg><use href="#doc"/></svg></i>
    <i><svg><use href="#doc"/></svg></i>
    <i><svg><use href="#doc"/></svg></i>
    <i><svg><use href="#doc"/></svg></i>
    <i><svg><use href="#clickup"/></svg></i>
    <i><svg><use href="#maple"/></svg></i>
    <i><svg><use href="#maple"/></svg></i>
    <i><svg><use href="#maple"/></svg></i>
    <i><svg><use href="#cpanel"/></svg></i>
    <i><svg><use href="#stripe"/></svg></i>
    <i><svg><use href="#cpanel"/></svg></i>
    <i><svg><use href="#cpanel"/></svg></i>
    <i><svg><use href="#vercel"/></svg></i>
    <i><svg><use href="#hug"/></svg></i>
    <i><svg><use href="#hug"/></svg></i>
  </div>
  <div class="tabs">
    <i><svg class="oa"><use href="#openai"/></svg></i>
    <i><svg class="oa"><use href="#openai"/></svg></i>
    <i><svg><use href="#vercel"/></svg></i>
    <i><svg><use href="#hubspot"/></svg></i>
    <i><svg><use href="#gmail"/></svg></i>
    <i><svg><use href="#building"/></svg></i>
    <i><svg><use href="#cloudflare"/></svg></i>
    <i><svg><use href="#supabase"/></svg></i>
    <i><svg><use href="#globe"/></svg></i>
    <i><svg><use href="#gletter"/></svg></i>
    <i><svg><use href="#gearw"/></svg></i>
    <i><svg><use href="#doc"/></svg></i>
    <i><svg><use href="#drive"/></svg></i>
    <i><svg><use href="#vercel"/></svg></i>
    <i><svg><use href="#vercel"/></svg></i>
    <i><svg><use href="#globe"/></svg></i>
    <i><svg><use href="#vercel"/></svg></i>
    <i><svg><use href="#vercel"/></svg></i>
    <i><svg><use href="#vercel"/></svg></i>
    <i><svg><use href="#globe"/></svg></i>
    <i><svg><use href="#globe"/></svg></i>
    <i><svg><use href="#vercel"/></svg></i>
    <i class="last"><svg><use href="#vercel"/></svg></i>
  </div>
  <div class="active-tab"><svg viewBox="0 0 16 16"><path d="M2 2l12 12M14 2L2 14"/></svg></div>
  <svg class="newtab" viewBox="0 0 20 20"><path d="M10 0v20M0 10h20"/></svg>
  <div class="tabmenu"><svg viewBox="0 0 16 16"><path d="M2 5l6 6 6-6"/></svg></div>
</div>

<div class="chrome">
  <div class="toolbar">
    <div class="navbtns"><svg><use href="#t-back"/></svg><svg><use href="#t-fwd"/></svg><svg><use href="#t-reload"/></svg><svg><use href="#t-home"/></svg></div>
    <div class="omnibox">
      <div class="siteinfo"><svg><use href="#t-tune"/></svg></div>
      <div class="url"><span>https://</span>wisdomos-phoenix-frontend.vercel.app<span>/integrated</span></div>
      <svg class="star"><use href="#t-star"/></svg>
    </div>
    <div class="exts">
      <svg><use href="#x-vlc"/></svg>
      <div class="badged"><svg><use href="#x-hub"/></svg><b>11</b></div>
      <svg><use href="#x-keys"/></svg><svg><use href="#x-bug"/></svg><svg><use href="#x-radar"/></svg><svg><use href="#x-fox"/></svg><svg class="oa"><use href="#x-gpt"/></svg><svg><use href="#x-1p"/></svg><svg><use href="#x-pdf"/></svg><svg><use href="#x-puzzle"/></svg>
    </div>
    <div class="vsep"></div>
    <div class="profile"><i>P</i><span>Work</span></div>
    <div class="dots"><i></i><i></i><i></i></div>
  </div>
  <div class="bookmarks">
    <svg><use href="#b-apps"/></svg><div class="vsep"></div>
    <div class="marks">
      <a><svg><use href="#b-search"/></svg>Suggested Sites</a>
      <a><svg><use href="#b-msn"/></svg>Web Slice Gallery</a>
      <a><svg><use href="#globe"/></svg>Éditeur officiel du...</a>
      <a><svg><use href="#globe"/></svg>Gmail</a>
      <a><svg><use href="#b-yt"/></svg>YouTube</a>
      <a><svg><use href="#b-maps"/></svg>Maps</a>
      <a><svg><use href="#b-nato"/></svg>NATO - Official tex...</a>
      <a><svg><use href="#globe"/></svg>Problems of U.S. F...</a>
      <a><svg><use href="#globe"/></svg>The European Cris...</a>
      <a><svg><use href="#globe"/></svg>Director of Nation...</a>
      <a><svg><use href="#globe"/></svg>Partnership for Pe...</a>
      <a><svg><use href="#globe"/></svg>Nuremberg Trials -...</a>
      <a><svg><use href="#globe"/></svg>NATO - Declassifie...</a>
      <a><svg><use href="#b-jstor"/></svg>Perestroika as Rev...</a>
    </div>
    <svg class="more" viewBox="0 0 20 16"><path d="M2 1l7 7-7 7M11 1l7 7-7 7"/></svg>
    <div class="vsep"></div>
    <a class="all"><svg><use href="#b-folder"/></svg>All Bookmarks</a>
  </div>
</div>

<div class="page">
  <header class="sitenav">
    <div class="haze orange"></div><div class="haze yellow"></div>
    <div class="navrow">
      <svg class="phoenix" viewBox="820 40 220 310">
        <path fill="url(#gWing)" d="M928 288L862 303 892 269 844 253 882 237 828 186 878 203 844 135 886 153 862 86 903 122 928 110z"/>
        <path fill="url(#gWing2)" d="M928 288L995 303 965 269 1013 253 975 237 1029 186 979 203 1013 135 971 153 995 86 954 122 928 110z"/>
        <path fill="url(#gBelly)" d="M928 116L898 128 903 150 888 158 896 176 880 190 892 200 888 212 906 222 896 244 928 234 962 246 952 230 970 218 960 206 978 184 962 182 970 158 952 160z"/>
        <path fill="#f0a384" d="M928 50l10 24h-20z"/><circle cx="929" cy="92" r="26" fill="url(#gHead)"/><circle cx="937" cy="89" r="5.500" fill="#44506a"/>
        <path stroke="url(#gLeg)" stroke-width="5" fill="none" d="M911 303l-9 37 .1 0M947 303l9 37 .1 0"/>
      </svg>
      <div class="brand"><strong>WisdomOS</strong><span>Rise into<br>Fulfillment</span></div>
      <a class="signin">Sign<br>In</a>
      <a class="cta">Get<br>Started</a>
      <a class="item dash"><svg><use href="#l-home"/></svg>Dashboard</a>
      <a class="item integ"><svg class="sm"><use href="#l-layers"/></svg><span>Integrated<br>Display</span></a>
      <a class="item phx"><svg class="sm"><use href="#l-sparkles"/></svg><span>Phoenix<br>Tools</span><svg class="chev-sm"><use href="#l-chev"/></svg></a>
      <a class="item life"><svg class="sm"><use href="#l-target"/></svg><span>Life<br>Areas</span><svg class="chev-sm"><use href="#l-chev"/></svg></a>
      <a class="item ins"><svg><use href="#l-trend"/></svg>Insights<svg class="chev"><use href="#l-chev"/></svg></a>
      <a class="item res"><svg><use href="#l-book"/></svg>Resources<svg class="chev"><use href="#l-chev"/></svg></a>
      <a class="item"><svg><use href="#l-gear"/></svg>Settings</a>
    </div>
  </header>
  <div class="subbar"><span>p</span><span>p</span><span>g</span><span>y</span></div>
  <div class="body">
    <aside class="side">
      <section class="contrib">
        <div class="chead">
          <div class="tile"><svg><use href="#l-sparkles"/></svg></div>
          <div><h2>Your Contribution<br>Display</h2><p>You ARE a contribution</p></div>
        </div>
        <div class="quote"><em>"Click to add your identity<br>statement"</em><small>Click to edit</small><div class="pips"><i></i><i></i><i></i><i></i><i></i></div></div>
        <div class="acc first"><svg><use href="#l-award"/></svg><span>Core Strengths</span><svg><use href="#l-plus"/></svg></div>
        <div class="acc"><svg><use href="#l-heart"/></svg><span>Natural Contributions</span><svg><use href="#l-plus"/></svg></div>
        <div class="acc"><svg><use href="#l-quote"/></svg><span>Acknowledgments</span><svg><use href="#l-plus"/></svg></div>
      </section>
    </aside>
    <main class="main">
      <section class="card top">
        <div class="panel">
          <div class="col">
            <h4><svg><use href="#l-shield"/></svg>What's Acceptable</h4>
            <ul><li>Proactive recovery</li><li>Clear deliverables</li><li>Structured creativity</li><li>Intentional rest</li><li>Aligned partnerships</li></ul>
          </div>
          <div class="col">
            <h4><svg><use href="#l-warn"/></svg>No Longer Tolerated</h4>
            <ul><li>Chronic interruptions</li><li>Chaos as creativity</li><li>Unclear expectations</li><li>Energy vampires</li><li>Postponed self-care</li></ul>
          </div>
        </div>
        <svg class="radar" viewBox="0 0 400 400">
          <circle cx="200" cy="200" r="160" fill="#fbecee"/>
          <circle cx="200" cy="200" r="96" fill="#fae8db"/>
          <circle cx="200" cy="200" r="48" fill="#ede3d1"/>
          <g class="grid">
            <circle cx="200" cy="200" r="32"/><circle cx="200" cy="200" r="64"/><circle cx="200" cy="200" r="96"/><circle cx="200" cy="200" r="128"/><circle cx="200" cy="200" r="160"/>
            <path d="M200 200V20"/><path d="M200 200L283.650 40.620"/><path d="M200 200L348.140 97.750"/><path d="M200 200L378.690 178.300"/><path d="M200 200L368.300 263.830"/><path d="M200 200L319.360 334.730"/><path d="M200 200L243.080 374.770"/><path d="M200 200L156.920 374.770"/><path d="M200 200L80.640 334.730"/><path d="M200 200L31.700 263.830"/><path d="M200 200L21.310 178.300"/><path d="M200 200L51.860 97.750"/><path d="M200 200L116.350 40.620"/>
          </g>
          <polygon class="shape" points="200,152 214.870,171.670 252.670,163.640 215.880,198.070 274.800,228.370 221.220,223.950 211.490,246.610 192.340,231.070 189.390,211.980 155.120,217.020 168.230,196.140 147.330,163.640 185.130,171.670"/>
          <g class="pts">
            <circle cx="200" cy="152" r="4.600"/><circle cx="214.870" cy="171.670" r="4.600"/><circle cx="252.670" cy="163.640" r="4.600"/><circle cx="215.880" cy="198.070" r="4.600"/><circle cx="274.800" cy="228.370" r="4.600"/><circle cx="221.220" cy="223.950" r="4.600"/><circle cx="211.490" cy="246.610" r="4.600"/><circle cx="192.340" cy="231.070" r="4.600"/><circle cx="189.390" cy="211.980" r="4.600"/><circle cx="155.120" cy="217.020" r="4.600"/><circle cx="168.230" cy="196.140" r="4.600"/><circle cx="147.330" cy="163.640" r="4.600"/><circle cx="185.130" cy="171.670" r="4.600"/>
          </g>
          <g class="labels">
            <text x="200" y="19.200">Work</text><text x="285.500" y="40.300">Health</text><text x="351.500" y="98.500">Finance</text><text x="382.700" y="181.400">Intimacy</text><text x="372.200" y="268.700">Time</text><text x="322.100" y="341.100">Spiritual</text><text x="244" y="382.200">Creativity</text><text x="156" y="382.200">Friendship</text><text x="78" y="341.100">Learning</text><text x="28" y="268.700">Home</text><text x="17.300" y="181.400">Sexuality</text><text x="48.600" y="98.500">Emotional</text><text x="114.500" y="40.300">Legacy</text>
          </g>
        </svg>
      </section>
      <section class="card flow">
        <h3><svg viewBox="0 0 45 45"><rect width="45" height="45" rx="9" fill="url(#gSync)"/><g fill="none" stroke="#fff" stroke-width="4.500"><path d="M35 19A13.500 13.500 0 0 0 12 15.500M10 26a13.500 13.500 0 0 0 23 3.500"/></g><path fill="#fff" d="M6 9.500V23l12.500-3zM39 35.500V22l-12.500 3z"/></svg>Information Flow</h3>
        <div class="flows">
          <div><h5>Contribution<svg><use href="#l-arrow"/></svg>Autobiography</h5><p>Your natural contributions shape your life story</p></div>
          <div><h5>Autobiography<svg><use href="#l-arrow"/></svg>Fulfillment</h5><p>Past patterns inform current commitments</p></div>
          <div><h5>Fulfillment<svg><use href="#l-arrow"/></svg>Assessment</h5><p>Commitments define relationship quality</p></div>
          <div><h5>Assessment<svg><use href="#l-arrow"/></svg>Fulfillment</h5><p>Assessment scores update fulfillment status</p></div>
        </div>
      </section>
    </main>
  </div>
  <button class="fab"><svg><use href="#l-plus"/></svg></button>
</div>
</body>
</html>
```

FILE: styles.css
```css
/* 1rem stands for 100 layout units; the window is 44.8 units wide */
html { font-size: 91.428571px; }
* { box-sizing: border-box; }
body { margin: 0; width: 44.8rem; height: 25.2rem; overflow: hidden; background: #fff; color: #000; font-family: Inter, "Liberation Sans", sans-serif; font-size: .35rem; display: flex; flex-direction: column; }
h2, h3, h4, h5, p, ul { margin: 0; padding: 0; font-weight: inherit; font-size: inherit; }
i { font-style: normal; }
svg { display: block; flex: none; overflow: visible; }
.defs { position: absolute; width: 0; height: 0; }
.oa { color: #e8e8e8; }

/* macOS menu bar */
.menubar { height: .48rem; flex: none; background: #000; color: #fff; display: flex; align-items: center; font-size: .26rem; letter-spacing: -.004rem; white-space: nowrap; }
.apple { width: .31rem; height: .31rem; margin-left: .385rem; margin-bottom: .03rem; }
.menus { margin-left: .385rem; width: 20.41rem; padding-bottom: .03rem; display: grid; grid-template-columns: 1.42rem .84rem .89rem 1rem 1.28rem 1.76rem 1.32rem .83rem 1.39rem auto; }
.menus b { font-weight: 700; letter-spacing: -.006rem; }
.status { display: grid; align-items: center; grid-template-columns: .72rem .79rem .74rem .66rem .64rem .52rem 1.52rem .69rem .73rem .72rem .8rem .84rem .71rem .83rem .84rem .74rem .7rem .65rem .65rem .66rem .64rem .7rem .77rem .77rem .69rem .67rem .65rem .62rem auto; }
.status svg { width: .32rem; height: .32rem; }
.status svg.wide { width: .48rem; margin-left: -.08rem; }
.weather { display: flex; align-items: center; }
.weather span { padding-bottom: .03rem; letter-spacing: -.01rem; }
.clock { padding-bottom: .03rem; letter-spacing: .001rem; }

/* Tab strip */
.tabstrip { height: .82rem; flex: none; background: #112321; display: flex; align-items: center; padding-top: .02rem; }
.lights { display: flex; gap: .165rem; margin-left: .255rem; width: 1.445rem; }
.lights i { width: .24rem; height: .24rem; border-radius: 50%; }
.lights .r { background: #ed6a5e; }
.lights .o { background: #2f3f3d; }
.lights .g { background: #61c554; }
.tabs { display: flex; color: #9aa0a6; }
.tabs i { width: .68rem; display: flex; align-items: center; gap: .16rem; }
.wide-tabs i { width: .7rem; }
.tabs i::after { content: ""; width: .04rem; height: .32rem; border-radius: .02rem; background: #2d3d3c; }
.tabs i.last { width: .56rem; }
.tabs i.last::after { display: none; }
.tabs svg { width: .32rem; height: .32rem; }
.tabs .oa { color: #d6d9d8; }
.active-tab { align-self: flex-end; position: relative; width: .64rem; height: .68rem; border-radius: .2rem .2rem 0 0; background: #2d3d3c; display: flex; align-items: center; justify-content: center; padding-bottom: .12rem; }
.active-tab::before, .active-tab::after { content: ""; position: absolute; bottom: 0; width: .2rem; height: .2rem; }
.active-tab::before { right: 100%; background: radial-gradient(circle at 0 0, transparent .198rem, #2d3d3c .202rem); }
.active-tab::after { left: 100%; background: radial-gradient(circle at 100% 0, transparent .198rem, #2d3d3c .202rem); }
.active-tab svg, .newtab, .tabmenu svg { fill: none; stroke: #c6d5d1; stroke-width: 2.4; }
.active-tab svg { width: .18rem; height: .18rem; }
.newtab { width: .2rem; height: .2rem; margin-left: .3rem; margin-bottom: .03rem; }
.tabmenu { width: .56rem; height: .56rem; border-radius: .18rem; margin-left: 1.26rem; background: #2d3d3c; display: flex; align-items: center; justify-content: center; }
.tabmenu svg { width: .18rem; height: .18rem; stroke-width: 2.4; }

/* Toolbar and bookmarks */
.chrome { height: 1.62rem; flex: none; background: #2d3d3c; border-bottom: .02rem solid #464c4a; }
.toolbar { height: .92rem; display: flex; align-items: center; }
.toolbar svg, .bookmarks svg { width: .32rem; height: .32rem; }
.navbtns { display: flex; gap: .4rem; margin-left: .28rem; width: 2.84rem; }
.omnibox { width: 31.46rem; height: .68rem; border-radius: .34rem; background: #192928; display: flex; align-items: center; padding: 0 .32rem 0 .1rem; }
.siteinfo { width: .48rem; height: .48rem; border-radius: 50%; background: #2d3d3c; display: flex; align-items: center; justify-content: center; }
.siteinfo svg { width: .3rem; height: .3rem; }
.url { margin-left: .165rem; flex: 1; font-size: .28rem; color: #e3e8e6; letter-spacing: -.0013rem; white-space: nowrap; }
.url span { color: #c3cbc9; }
.exts { display: flex; gap: .4rem; margin-left: .36rem; width: 6.98rem; }
.badged { position: relative; }
.badged b { position: absolute; left: .16rem; top: .16rem; width: .28rem; height: .28rem; border-radius: .08rem; background: #202a28; color: #fff; font-size: .18rem; line-height: .28rem; text-align: center; }
.vsep { width: .04rem; height: .32rem; border-radius: .02rem; background: #43524f; }
.toolbar .vsep { margin-left: .18rem; }
.profile { width: 1.58rem; height: .68rem; border-radius: .34rem; margin-left: .19rem; background: #1f4e4a; color: #d5e8e2; display: flex; align-items: center; padding-left: .19rem; gap: .12rem; font-size: .28rem; letter-spacing: -.005rem; }
.profile i { width: .4rem; height: .4rem; border-radius: 50%; background: #73a045; color: #e8f2dc; font-size: .24rem; line-height: .4rem; text-align: center; }
.dots { display: flex; flex-direction: column; gap: .05rem; margin-left: .42rem; }
.dots i { width: .06rem; height: .06rem; border-radius: 50%; background: #c6d5d1; }
.bookmarks { height: .68rem; display: flex; align-items: center; color: #c3cbc9; font-size: .24rem; white-space: nowrap; letter-spacing: 0; }
.bookmarks > svg:first-child { width: .3rem; height: .3rem; margin-left: .25rem; }
.bookmarks > .vsep { margin-left: .29rem; }
.marks { margin-left: .28rem; width: 40.35rem; display: grid; grid-template-columns: 2.62rem 2.74rem 3.08rem 1.41rem 1.73rem 1.37rem 3.08rem 3.08rem 3.09rem 3.07rem 3.09rem 3.08rem 3.08rem auto; }
.bookmarks a { display: flex; align-items: center; gap: .12rem; }
.bookmarks svg.more { width: .2rem; height: .16rem; fill: none; stroke: #c6d5d1; stroke-width: 2.4; }
.bookmarks .more + .vsep { margin-left: .35rem; }
.all { margin-left: .31rem; }

/* Site navigation */
.page { position: relative; flex: 1; display: flex; flex-direction: column; min-height: 0; }
.sitenav { position: relative; height: 1.62rem; flex: none; overflow: hidden; border-bottom: .02rem solid #fbf0cf;
  background:
    radial-gradient(ellipse .6rem .9rem at 39.75rem 1.1rem, rgba(30,30,40,.02), transparent),
    radial-gradient(ellipse .6rem .9rem at 41.05rem 1.1rem, rgba(30,30,40,.018), transparent),
    radial-gradient(ellipse .6rem 1rem at 42.4rem 1.1rem, rgba(30,30,40,.032), transparent),
    radial-gradient(ellipse .6rem .9rem at 43.65rem 1.1rem, rgba(30,30,40,.02), transparent),
    radial-gradient(ellipse 1.1rem 1.1rem at 7.8rem .8rem, rgba(249,205,90,.12), transparent),
    radial-gradient(ellipse 3.2rem 1rem at 10.6rem .8rem, rgba(240,120,80,.04), transparent),
    radial-gradient(ellipse 5rem 1.2rem at 5.5rem .7rem, rgba(217,74,74,.05), transparent),
    radial-gradient(ellipse 4.4rem .9rem at 7rem 1.62rem, rgba(30,35,40,.045), transparent),
    #fff; }
.haze { position: absolute; }
.haze.orange { left: 1.98rem; top: .6rem; width: .9rem; height: 1.6rem; background: rgba(235,175,110,.26); filter: blur(.26rem); }
.haze.yellow { left: 36.7rem; top: .5rem; width: 2.15rem; height: 1.6rem; background: rgba(245,222,130,.3); filter: blur(.22rem); }
.navrow { position: relative; height: 1.6rem; padding-left: 7.433rem; display: grid; align-items: center; grid-template-columns: 1.26rem 2.917rem 1.56rem 2.915rem 2.945rem 3.6rem 3.35rem 2.97rem 3.32rem 3.76rem auto; line-height: .5rem; font-weight: 500; white-space: nowrap; }
.phoenix { width: .7333rem; height: 1.0333rem; align-self: start; margin-top: .313rem; }
.brand { display: flex; flex-direction: column; padding-top: .02rem; }
.brand strong { width: 2.72rem; font-size: .5rem; line-height: .7rem; font-weight: 700; letter-spacing: 0; background: linear-gradient(90deg, #d94a4e, #f5975c); -webkit-background-clip: text; background-clip: text; color: transparent; }
.brand span { font-size: .3rem; line-height: .4rem; font-weight: 400; }
.signin { width: 1.17rem; padding-top: .01rem; text-align: center; }
.cta { width: 2.02rem; height: 1.4rem; padding: .21rem 0; border-radius: .2rem; background: #f1975b; text-align: center; }
.item { display: flex; align-items: center; padding-top: .01rem; }
.item svg, .chead svg, .acc svg, .col svg, .flows svg, .fab svg { width: .4rem; height: .4rem; fill: none; stroke: #000; stroke-width: 2; stroke-linecap: round; stroke-linejoin: round; }
.item svg:first-child { margin-right: .2rem; }
.item svg.sm { width: .27rem; height: .27rem; }
.item svg.chev { width: .3rem; height: .3rem; margin-left: .2rem; }
.item svg.chev-sm { width: .2rem; height: .2rem; margin-left: .3rem; }
.integ { width: 3.1rem; height: 1.4rem; border-radius: .2rem; padding-left: .375rem; background: #fffbeb; }
.item.integ svg.sm { margin-right: .185rem; }
.phx span { width: 1.38rem; text-align: center; margin-left: .1rem; }
.life span { width: 1rem; text-align: center; margin-left: .1rem; }
.phx, .life { text-align: center; }

.subbar { height: .5rem; flex: none; overflow: hidden; border-bottom: .02rem solid #fdf0cf; background: #fff; font-size: .35rem; line-height: .5rem; display: flex; }
.subbar span { width: .2rem; margin-top: -.42rem; height: .5rem; }
.subbar span:nth-child(1) { margin-left: 4.84rem; }
.subbar span:nth-child(2) { margin-left: 1.69rem; }
.subbar span:nth-child(3) { margin-left: .97rem; }
.subbar span:nth-child(4) { margin-left: .34rem; }

.body { flex: 1; min-height: 0; display: flex; }
.side { width: 9.6rem; flex: none; overflow: hidden; border-right: .02rem solid #fdf6e0; padding: 0 .6rem; background: #fff; }
.contrib { margin-top: -.065rem; width: 8.38rem; border: .025rem solid #fdf2cf; border-radius: .3rem; padding: .6rem; background: linear-gradient(135deg, #fffdf4, #fef9f6); height: 11.025rem; }
.chead { display: flex; align-items: center; gap: .3rem; }
.tile { width: 1rem; height: 1rem; border-radius: .2rem; background: linear-gradient(135deg, #f9d84a, #f0955b); display: flex; align-items: center; justify-content: center; }
.tile svg { width: .6rem; height: .6rem; }
.chead h2 { font-size: .5rem; line-height: .7rem; font-weight: 700; white-space: nowrap; }
.chead p { font-size: .35rem; line-height: .5rem; }
.quote { position: relative; margin-top: .6rem; height: 2.88rem; width: 7.13rem; border: .05rem solid #fdf1c4; border-radius: .2rem; background: #fff; text-align: center; padding-top: .4rem; }
.quote em { display: block; font-size: .45rem; line-height: .7rem; font-weight: 500; letter-spacing: .0005rem; white-space: nowrap; }
.quote small { display: block; margin-top: .2rem; font-size: .3rem; line-height: .4rem; }
.pips { position: absolute; right: .03rem; bottom: .51rem; display: flex; gap: .048rem; }
.pips i { width: .07rem; height: .07rem; border-radius: 50%; background: #f29f66; }
.pips i:nth-child(1) { opacity: .2; }
.pips i:nth-child(3) { opacity: .08; }
.pips i:nth-child(4) { opacity: .5; }
.acc { width: 7.13rem; height: 1.2rem; display: flex; align-items: center; font-size: .4rem; font-weight: 600; white-space: nowrap; }
.acc.first { margin: .5rem 0 .3rem; }
.acc svg { width: .5rem; height: .5rem; }
.acc span { flex: 1; margin-left: .2rem; }

.main { flex: 1; overflow: hidden; padding: 0 .6rem; background: linear-gradient(127.2deg, #dbdcdf 0, #fff 12.2%, #e3e3e3 23.3%, #d0d0d0 30.8%, #bfbdbe 37%, #9b9797 55%, #929090 58%, #807c7e 65.6%, #757577 69.4%, #4b4d50 84%, #36383b 92%, #242529 100%); }
.card { width: 34rem; border: .025rem solid #fff3d3; background: #fff; border-radius: .3rem; padding: .6rem; }
.card.top { height: 14.92rem; border-top: 0; border-radius: 0 0 .3rem .3rem; padding-top: 0; }
.panel { height: 3.7rem; border-radius: 0 0 .2rem .2rem; background: #f9fafc; padding: 0 .4rem; display: grid; grid-template-columns: 16.17rem auto; width: 32.74rem; overflow: hidden; }
.col h4 { margin-top: -.3rem; display: flex; align-items: center; gap: .08rem; line-height: .5rem; font-weight: 600; }
.col ul { margin-top: .2rem; list-style: none; display: flex; flex-direction: column; gap: .1rem; }
.col li { line-height: .5rem; }
.col li::before { content: "• "; }
.radar { width: 10rem; height: 10rem; margin-top: .6rem; overflow: hidden; }
.grid { fill: none; stroke: #74716f; stroke-opacity: .15; stroke-width: 1; }
.shape { fill: #dc4f4b; fill-opacity: .31; stroke: #e0645d; stroke-width: 2; }
.pts { fill: #df524d; stroke: #fff; stroke-width: 1.8; }
.labels { fill: #374151; font-size: 12px; font-weight: 500; text-anchor: middle; }
.flow { margin-top: .6rem; height: 4.04rem; }
.flow h3 { font-size: .45rem; line-height: .7rem; font-weight: 600; display: flex; align-items: center; gap: .11rem; }
.flow h3 svg { width: .45rem; height: .45rem; }
.flows { margin-top: .4rem; display: grid; grid-template-columns: repeat(4, 1fr); gap: .4rem; width: 32.76rem; }
.flows > div { height: 1.7rem; border-radius: .2rem; padding: .3rem; background: linear-gradient(135deg, #f9fafc, #f2f3f5); }
.flows h5 { display: flex; align-items: center; gap: .2rem; line-height: .5rem; font-weight: 500; }
.flows p { margin-top: .2rem; font-size: .3rem; line-height: .4rem; white-space: nowrap; }

.fab { position: absolute; right: .61rem; bottom: .62rem; width: 1.37rem; height: 1.37rem; padding: 0; border-radius: 50%; border: .03rem solid #96508c; background: linear-gradient(135deg, #d7494c, #f0955c); box-shadow: 0 0 0 .02rem rgba(255,255,255,.7), 0 .1rem .3rem rgba(0,0,0,.15); display: flex; align-items: center; justify-content: center; }
.fab svg { width: .6rem; height: .6rem; }
```
